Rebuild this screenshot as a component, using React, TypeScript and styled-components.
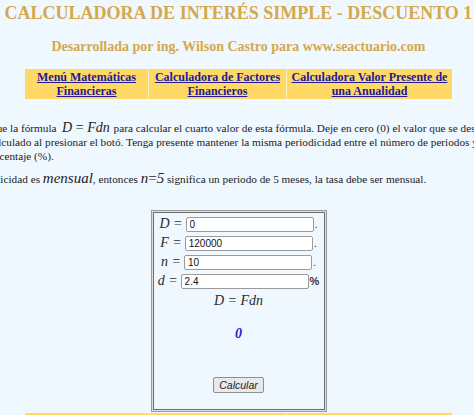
import React from "react";
import styled, { createGlobalStyle } from "styled-components";

const GlobalStyle = createGlobalStyle`
  html, body {
    margin: 0;
    padding: 0;
    background: #f0f8ff;
    overflow: hidden;
  }
  #root {
    width: 474px;
    height: 415px;
    overflow: hidden;
  }
`;

const Page = styled.div`
  width: 477px;
  text-align: center;
  font-family: "Liberation Serif", "Times New Roman", serif;
`;

const Title = styled.h1`
  margin: 0;
  padding-top: 3px;
  font-size: 18px;
  line-height: 21px;
  font-weight: bold;
  color: #d4a84b;
  white-space: nowrap;
`;

const Subtitle = styled.h2`
  margin: 15px 0 0;
  font-size: 14px;
  line-height: 16px;
  font-weight: bold;
  color: #d4a84b;
  white-space: nowrap;
`;

const LinkTable = styled.nav<{ $top: number }>`
  margin: ${(p) => p.$top}px auto 0;
  width: 427px;
  display: grid;
  grid-template-columns: 123px 137px 165px;
  column-gap: 1px;
  background: #fff2c2;
`;

const Cell = styled.div`
  background: #ffd966;
  padding: 1px 0;
  font-size: 12px;
  line-height: 14px;
  font-weight: bold;
  text-align: center;
  white-space: nowrap;
`;

const NavLink = styled.a`
  color: #22199a;
  text-decoration: underline;
`;

const TextBlock = styled.div`
  margin: 22px 0 0 -29px;
  text-align: left;
  font-size: 11.25px;
  line-height: 14px;
  color: #222;
  white-space: nowrap;
`;

const Para = styled.p<{ $gap: number }>`
  margin: ${(p) => p.$gap}px 0 0;
`;

const Formula = styled.span`
  font-size: 14px;
  line-height: 1;
  margin: 0 1px 0 2px;
`;

const InlineMath = styled.span`
  font-size: 15px;
  line-height: 1;
`;

const Var = styled.i`
  font-style: italic;
`;

const Box = styled.div`
  box-sizing: border-box;
  width: 176px;
  margin: 24px auto 0;
  padding: 4px 0 18px;
  border: 1px solid #9a9a9a;
  box-shadow: inset 0 0 0 1px #dedede, inset 0 0 0 2px #6e6e6e;
  display: flex;
  flex-direction: column;
  align-items: center;
  font-style: italic;
  color: #2b2b2b;
`;

const Row = styled.div`
  box-sizing: border-box;
  height: 19px;
  padding-top: 2px;
  display: flex;
  align-items: baseline;
  justify-content: center;
`;

const Label = styled.span`
  font-size: 14px;
  line-height: 14px;
  margin-right: 3px;
`;

const Field = styled.input`
  box-sizing: border-box;
  width: 128px;
  height: 15px;
  padding: 0 3px;
  border: 1px solid #9b9b9b;
  border-radius: 2px;
  background: #fff;
  font: normal 10px "Liberation Sans", Arial, sans-serif;
  color: #111;
`;

const Suffix = styled.span<{ $bold?: boolean }>`
  margin-left: 1px;
  font: normal ${(p) => (p.$bold ? "bold" : "normal")} 11px "Liberation Sans", Arial, sans-serif;
  color: #333;
`;

const FormulaLine = styled.div`
  font-size: 14px;
  line-height: 20px;
`;

const Result = styled.div`
  margin-top: 13px;
  font-size: 14px;
  line-height: 20px;
  font-weight: bold;
  color: #1b1bd0;
`;

const CalcButton = styled.button`
  margin-top: 33px;
  height: 16px;
  padding: 0 5px;
  font: italic 10.5px "Liberation Sans", Arial, sans-serif;
  color: #222;
  background: #e9e9e9;
  border: 1px solid #8f8f8f;
  border-radius: 2px;
`;

const links = [
  ["Menú Matemáticas", "Financieras"],
  ["Calculadora de Factores", "Financieros"],
  ["Calculadora Valor Presente de", "una Anualidad"],
];

function Links({ top }: { top: number }) {
  return (
    <LinkTable $top={top}>
      {links.map(([a, b]) => (
        <Cell key={a}>
          <NavLink href="#">
            {a}
            <br />
            {b}
          </NavLink>
        </Cell>
      ))}
    </LinkTable>
  );
}

const fields = [
  { name: "D", value: "0", suffix: "." },
  { name: "F", value: "120000", suffix: "." },
  { name: "n", value: "10", suffix: "." },
  { name: "d", value: "2.4", suffix: "%" },
];

export default function App() {
  return (
    <>
      <GlobalStyle />
      <Page>
        <Title>CALCULADORA DE INTERÉS SIMPLE - DESCUENTO 1</Title>
        <Subtitle>Desarrollada por ing. Wilson Castro para www.seactuario.com</Subtitle>
        <Links top={14} />
        <TextBlock>
          <Para $gap={0}>
            Aplique la fórmula
            <Formula>
              {" "}
              <Var>D</Var> = <Var>Fdn</Var>
            </Formula>{" "}
            para calcular el cuarto valor de esta fórmula. Deje en cero (0) el valor que se desea calcular para que
            <br />
            sea calculado al presionar el botó. Tenga presente mantener la misma periodicidad entre el número de periodos y la tasa, expresada
            <br />
            en porcentaje (%).
          </Para>
          <Para $gap={8}>
            Periodicidad es{" "}
            <InlineMath>
              <Var>mensual</Var>
            </InlineMath>
            , entonces{" "}
            <InlineMath>
              <Var>n</Var>=<Var>5</Var>
            </InlineMath>{" "}
            significa un periodo de 5 meses, la tasa debe ser mensual.
          </Para>
        </TextBlock>
        <Box>
          {fields.map((f) => (
            <Row key={f.name}>
              <Label>
                <Var>{f.name}</Var> =
              </Label>
              <Field defaultValue={f.value} />
              <Suffix $bold={f.suffix === "%"}>{f.suffix}</Suffix>
            </Row>
          ))}
          <FormulaLine>
            <Var>D</Var> = <Var>Fdn</Var>
          </FormulaLine>
          <Result>0</Result>
          <CalcButton type="button">Calcular</CalcButton>
        </Box>
        <Links top={1} />
      </Page>
    </>
  );
}
